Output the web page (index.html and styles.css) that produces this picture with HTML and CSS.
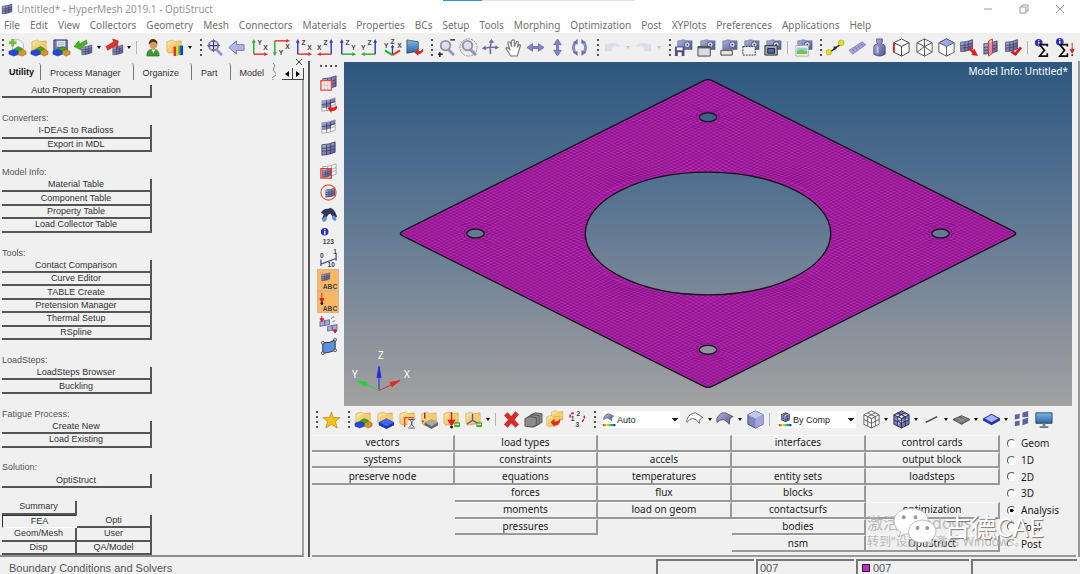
FILE: index.html
```html
<!DOCTYPE html>
<html lang="en">

<head>
    <meta charset="UTF-8">
    <meta name="viewport" content="width=device-width, initial-scale=1.0">
    <title>Untitled* - HyperMesh 2019.1 - OptiStruct</title>
    <link rel="stylesheet" href="styles.css">
</head>

<body>

    <!-- shared gradients -->
    <svg class="paints" aria-hidden="true">
        <defs>
            <linearGradient id="sky" x1="0" y1="0" x2="0" y2="1">
                <stop offset="0" stop-color="#7fb8e8" />
                <stop offset="1" stop-color="#2a64a8" />
            </linearGradient>
            <linearGradient id="gold" x1="0" y1="0" x2="1" y2="1">
                <stop offset="0" stop-color="#fdf0b0" />
                <stop offset="1" stop-color="#e5a835" />
            </linearGradient>
            <linearGradient id="steel" x1="0" y1="0" x2="1" y2="1">
                <stop offset="0" stop-color="#b4b8e4" />
                <stop offset="1" stop-color="#50548a" />
            </linearGradient>
            <linearGradient id="rainbow">
                <stop offset="0" stop-color="#e02020" />
                <stop offset=".3" stop-color="#f0e020" />
                <stop offset=".6" stop-color="#20d050" />
                <stop offset="1" stop-color="#2030e0" />
            </linearGradient>
        </defs>
    </svg>

    <!-- icon sprite -->
    <svg class="sprite" aria-hidden="true">
        <symbol id="p-comp" viewBox="0 0 20 20">
            <path d="M11 9l4 2v3l-4 2-4-2v-3z" fill="#2fae22" stroke="#1a6a14" stroke-width=".5" />
            <path d="M6 12l5 2v3l-5 2-5-2v-3z" fill="#2747d8" stroke="#142a90" stroke-width=".5" />
            <path d="M15 12l4 2v3l-4 2-4-2v-3z" fill="#d89428" stroke="#84560e" stroke-width=".5" />
        </symbol>
        <symbol id="p-folder" viewBox="0 0 20 20">
            <path d="M2 4l6-2 2 2 7-1v11l-13 2-2-2z" fill="url(#gold)" stroke="#c9963c" stroke-width=".6" />
            <path d="M5 7l13-2-2 8-12 2z" fill="#f6cf6f" opacity=".8" />
        </symbol>
        <symbol id="p-mesh" viewBox="0 0 20 20">
            <path d="M3 6q7 0 14-3v11q-7 3-14 3z" fill="url(#steel)" stroke="#2c2e50" stroke-width=".7" />
            <path d="M3 10q7 0 14-3M3 13q7 0 14-3M8 6v11M12 5v11" fill="none" stroke="#2c2e50" stroke-width=".7" />
        </symbol>
        <symbol id="p-wire" viewBox="0 0 20 20">
            <path d="M3 6q7 0 14-3v11q-7 3-14 3zM3 10q7 0 14-3M3 13q7 0 14-3M8 6v11M12 5v11" fill="#f8f8f8" stroke="#777" stroke-width=".6" />
        </symbol>
        <symbol id="p-cam" viewBox="0 0 20 20">
            <path d="M4 3h3l1-1h4l1 1h6v9H4z" fill="url(#steel)" stroke="#55588a" stroke-width=".6" />
            <circle cx="14" cy="7" r="3" fill="#dde" stroke="#4a4d80" />
            <circle cx="14" cy="7" r="1" fill="#446" />
        </symbol>
        <symbol id="p-lens" viewBox="0 0 20 20">
            <path d="M12 12l5 5" stroke="#9295c4" stroke-width="3" stroke-linecap="round" />
            <circle cx="9" cy="8" r="5" fill="#dcdee8" stroke="#9496a8" stroke-width="2" />
        </symbol>

        <symbol id="new" viewBox="0 0 20 20">
            <path d="M5 2h7l4 4v12H5z" fill="#fff" stroke="#999" stroke-width=".8" />
            <path d="M5 1v8M1 5h8" stroke="#6fc043" stroke-width="3" />
            <use href="#p-comp" />
        </symbol>
        <symbol id="open" viewBox="0 0 20 20"><use href="#p-folder" /><use href="#p-comp" /></symbol>
        <symbol id="save" viewBox="0 0 20 20">
            <path d="M2 2h14v14H4l-2-2z" fill="#7679b8" stroke="#3a3c70" />
            <path d="M5 3h9v6H5z" fill="#e8eaf6" />
            <path d="M6 5h7M6 7h7" stroke="#8a8cb8" stroke-width=".7" />
            <use href="#p-comp" />
        </symbol>
        <symbol id="import" viewBox="0 0 20 20">
            <use href="#p-mesh" x="6" y="5" width="15" height="15" />
            <path d="M0 9l5-6 1 3 7-4 1 4-7 4 1 3z" fill="#41b51f" stroke="#25780f" stroke-width=".5" />
        </symbol>
        <symbol id="export" viewBox="0 0 20 20">
            <use href="#p-mesh" x="6" y="5" width="15" height="15" />
            <path d="M14 3l-6-2 1 3-8 5 2 4 8-5 2 3z" fill="#e0312c" stroke="#9d1714" stroke-width=".5" />
        </symbol>
        <symbol id="user" viewBox="0 0 20 20">
            <path d="M4 19q0-7 5-7h3q5 0 5 7z" fill="#3d9c35" stroke="#1e611b" stroke-width=".6" />
            <path d="M9 12l2 4 2-4z" fill="#fff" />
            <ellipse cx="11" cy="7" rx="4" ry="5" fill="#d99a5b" />
            <path d="M6 7q0-6 5-6 5 1 4 6-1-3-5-3-2 1-4 3z" fill="#54310f" />
        </symbol>
        <symbol id="results" viewBox="0 0 20 20">
            <use href="#p-folder" />
            <path d="M9 9h3v10H9z" fill="#e83020" /><path d="M12 9h2v10h-2z" fill="#f4e020" /><path d="M14 8h2v10h-2z" fill="#20c840" /><path d="M16 8h3v10h-3z" fill="#2038e0" />
        </symbol>
        <symbol id="fit" viewBox="0 0 20 20">
            <use href="#p-lens" />
            <path d="M9 4v8M5 8h8" stroke="#3f4276" stroke-width="1.2" />
            <path d="M9 1l2 3H7zM9 15l2-3H7zM2 8l3-2v4zM16 8l-3-2v4z" fill="#5b5e94" />
        </symbol>
        <symbol id="back" viewBox="0 0 20 20">
            <path d="M2 10l8-7v4h8v6h-8v4z" fill="#b3b5e6" stroke="#7779b4" />
        </symbol>
        <symbol id="yx" viewBox="0 0 20 20">
            <path d="M4 17V4" stroke="#20b030" stroke-width="1.5" /><path d="M4 1l2 4H2z" fill="#20b030" />
            <path d="M4 17h12" stroke="#e03030" stroke-width="1.5" /><path d="M19 17l-4-2v4z" fill="#e03030" />
            <text x="8" y="7">Y</text><text x="14" y="13">X</text>
        </symbol>
        <symbol id="xy" viewBox="0 0 20 20">
            <path d="M3 3v12" stroke="#20b030" stroke-width="1.5" /><path d="M3 19l2-4H1z" fill="#20b030" />
            <path d="M3 3h13" stroke="#e03030" stroke-width="1.5" /><path d="M19 3l-4-2v4z" fill="#e03030" />
            <text x="7" y="18">Y</text><text x="14" y="12">X</text>
        </symbol>
        <symbol id="zx" viewBox="0 0 20 20">
            <path d="M4 17V4" stroke="#2838d8" stroke-width="1.5" /><path d="M4 1l2 4H2z" fill="#2838d8" />
            <path d="M4 17h12" stroke="#e03030" stroke-width="1.5" /><path d="M19 17l-4-2v4z" fill="#e03030" />
            <text x="8" y="7">Z</text><text x="14" y="13">X</text>
        </symbol>
        <symbol id="xz" viewBox="0 0 20 20">
            <path d="M16 17V4" stroke="#2838d8" stroke-width="1.5" /><path d="M16 1l2 4h-4z" fill="#2838d8" />
            <path d="M16 17H4" stroke="#e03030" stroke-width="1.5" /><path d="M1 17l4-2v4z" fill="#e03030" />
            <text x="8" y="7">Z</text><text x="1" y="13">X</text>
        </symbol>
        <symbol id="zy" viewBox="0 0 20 20">
            <path d="M4 17V4" stroke="#2838d8" stroke-width="1.5" /><path d="M4 1l2 4H2z" fill="#2838d8" />
            <path d="M4 17h12" stroke="#20b030" stroke-width="1.5" /><path d="M19 17l-4-2v4z" fill="#20b030" />
            <text x="8" y="7">Z</text><text x="14" y="13">Y</text>
        </symbol>
        <symbol id="yz" viewBox="0 0 20 20">
            <path d="M16 17V4" stroke="#2838d8" stroke-width="1.5" /><path d="M16 1l2 4h-4z" fill="#2838d8" />
            <path d="M16 17H4" stroke="#20b030" stroke-width="1.5" /><path d="M1 17l4-2v4z" fill="#20b030" />
            <text x="8" y="7">Z</text><text x="1" y="13">Y</text>
        </symbol>
        <symbol id="iso" viewBox="0 0 20 20">
            <path d="M10 17V9" stroke="#2838d8" stroke-width="1.5" /><path d="M10 7l2 3H8z" fill="#2838d8" />
            <path d="M10 18l-8-5" stroke="#20b030" stroke-width="2" /><path d="M10 18l8-5" stroke="#e03030" stroke-width="2" />
            <text x="8" y="6">Z</text><text x="1" y="10">Y</text><text x="15" y="10">X</text>
        </symbol>
        <symbol id="view" viewBox="0 0 20 20">
            <path d="M2 2l12 2v10l-12 2z" fill="url(#sky)" stroke="#333" stroke-width=".7" />
            <path d="M10 15l4-3v2q3 0 5-3 1 5-5 6v2z" fill="#e81c1c" />
        </symbol>
        <symbol id="zoomio" viewBox="0 0 20 20">
            <use href="#p-lens" />
            <path d="M14 2h5M1 17h5M3 15v5" stroke="#111" stroke-width="1.5" />
        </symbol>
        <symbol id="zoomc" viewBox="0 0 20 20">
            <use href="#p-lens" />
            <circle cx="10" cy="10" r="9" fill="none" stroke="#888" stroke-dasharray="2 1" />
        </symbol>
        <symbol id="pan" viewBox="0 0 20 20">
            <path d="M11 3q-2 7-1 14M3 11q7-2 14-1" stroke="#6a6da8" stroke-width="1.6" fill="none" />
            <path d="M11 1l3 4H8zM1 11l4-3v5zM19 10l-4-2v4z" fill="#6a6da8" />
        </symbol>
        <symbol id="hand" viewBox="0 0 20 20">
            <path d="M7 19q-2-4-5-8 1-2 4 1L4 5q1-2 3 0l1 4V3q2-2 3 0v6l2-5q2-1 2 1l-1 5 2-3q2 0 1 2l-3 10z" fill="#fff" stroke="#777" stroke-width="1.2" />
        </symbol>
        <symbol id="lr" viewBox="0 0 20 20">
            <path d="M1 10l6-4v3h6V6l6 4-6 4v-3H7v3z" fill="#8184c8" stroke="#5a5d98" stroke-width=".7" />
        </symbol>
        <symbol id="ud" viewBox="0 0 20 20">
            <path d="M10 1l4 6h-3v6h3l-4 6-4-6h3V7H6z" fill="#8184c8" stroke="#5a5d98" stroke-width=".7" />
        </symbol>
        <symbol id="rot" viewBox="0 0 20 20">
            <path d="M6 4q-5 6 0 12M14 4q5 6 0 12" fill="none" stroke="#8588c8" stroke-width="3" />
            <path d="M8 1v6L3 5zM8 19v-5l-5 1zM12 1v5l5-1zM12 19v-6l5 2z" fill="#6a6db0" />
        </symbol>
        <symbol id="undo" viewBox="0 0 20 20">
            <path d="M2 14l1-8 2 2q7-6 13 1-6-3-10 2l2 2z" fill="#dcdde9" stroke="#cfd0de" stroke-width=".5" />
        </symbol>
        <symbol id="redo" viewBox="0 0 20 20">
            <path d="M18 14l-1-8-2 2q-7-6-13 1 6-3 10 2l-2 2z" fill="#dcdde9" stroke="#cfd0de" stroke-width=".5" />
        </symbol>
        <symbol id="camsave" viewBox="0 0 20 20">
            <use href="#p-cam" />
            <path d="M1 9h10v10H1z" fill="#4c4f90" /><path d="M3 10h6v3H3zM4 15h4v4H4z" fill="#fff" />
        </symbol>
        <symbol id="camwin" viewBox="0 0 20 20">
            <use href="#p-cam" />
            <path d="M1 9h13v10H1z" fill="#d8dce6" stroke="#444" /><path d="M1 10h13" stroke="#555" stroke-width="2" />
        </symbol>
        <symbol id="cambar" viewBox="0 0 20 20">
            <use href="#p-cam" />
            <path d="M2 13h12v5H2z" fill="#e4e4e4" stroke="#444" />
        </symbol>
        <symbol id="camsel" viewBox="0 0 20 20">
            <use href="#p-cam" />
            <path d="M2 9h13v9H2z" fill="#f0f0f0" stroke="#333" stroke-dasharray="2 1" />
        </symbol>
        <symbol id="camscreen" viewBox="0 0 20 20">
            <use href="#p-cam" />
            <path d="M2 8h13v10H2z" fill="#a5aabc" stroke="#333" /><path d="M5 11h7v5H5z" fill="#4d69b4" stroke="#222" />
        </symbol>
        <symbol id="campic" viewBox="0 0 20 20">
            <use href="#p-cam" />
            <path d="M2 8h13v11H2z" fill="#fff" stroke="#aaa" /><path d="M3 10h11v4H3z" fill="#8fd0f2" /><path d="M3 14l4-2 7 2v3H3z" fill="#7bc246" />
        </symbol>
        <symbol id="nodes" viewBox="0 0 20 20">
            <path d="M4 15L16 6" stroke="#222" stroke-width="1.5" />
            <circle cx="3" cy="15" r="3" fill="#e6df1c" stroke="#918c0c" stroke-width=".5" />
            <circle cx="16" cy="5" r="3" fill="#e6df1c" stroke="#918c0c" stroke-width=".5" />
            <path d="M8 9h3v3H8z" fill="#222" />
        </symbol>
        <symbol id="ruler" viewBox="0 0 20 20">
            <path d="M1 13l14-9 4 3-14 10z" fill="#a0a3dc" stroke="#7477b4" stroke-width=".7" />
            <path d="M5 12l1 2M8 10l1 2M11 8l1 2M14 6l1 2" stroke="#6669a4" />
        </symbol>
        <symbol id="mass" viewBox="0 0 20 20">
            <path d="M7 1h6v3l-1 2q4 1 4 3v8q-6 4-12 0V9q0-2 4-3L7 4z" fill="url(#steel)" stroke="#44487c" stroke-width=".8" />
            <path d="M8 9v7" stroke="#c9cbee" stroke-width="2" />
        </symbol>
        <symbol id="cubered" viewBox="0 0 20 20">
            <path d="M10 1l8 4v10l-8 4-8-4V5zM2 5l8 4 8-4M10 9v10" fill="#fff" stroke="#444" />
            <path d="M2 5v10" stroke="#e02020" stroke-width="2" />
        </symbol>
        <symbol id="cubewire" viewBox="0 0 20 20">
            <path d="M10 1l8 4v10l-8 4-8-4V5zM2 5l8 4 8-4M10 9v10M10 1v8M2 15l8-6 8 6" fill="#fff" stroke="#555" />
        </symbol>
        <symbol id="cubetop" viewBox="0 0 20 20">
            <path d="M10 1l8 4v10l-8 4-8-4V5zM10 9v10" fill="#fff" stroke="#555" />
            <path d="M10 1l8 4-8 4-8-4z" fill="#a3a7e0" stroke="#555a90" />
        </symbol>
        <symbol id="meshmove" viewBox="0 0 20 20">
            <use href="#p-mesh" x="-1" y="-1" width="18" height="18" />
            <path d="M9 10l2-1 4 4 1-2 4 8-7-1 1-2z" fill="#e81c1c" />
        </symbol>
        <symbol id="meshcut" viewBox="0 0 20 20">
            <use href="#p-mesh" />
            <path d="M8 3l4-2v15l-4 3z" fill="#f8b0b0" fill-opacity=".7" stroke="#e82828" />
        </symbol>
        <symbol id="meshcheck" viewBox="0 0 20 20">
            <use href="#p-mesh" x="0" y="-1" width="18" height="18" />
            <path d="M9 14l4 3 6-7" fill="none" stroke="#dc1c1c" stroke-width="3" />
        </symbol>
        <symbol id="sum" viewBox="0 0 20 20">
            <circle cx="6" cy="5" r="4" fill="#2a2fc0" /><path d="M6 2v1M6 4v4" stroke="#fff" stroke-width="1.5" />
            <path d="M15 9V7H7l5 6-5 6h8v-3" fill="none" stroke="#111" stroke-width="1.8" />
        </symbol>
        <symbol id="sumload" viewBox="0 0 20 20">
            <circle cx="4" cy="4" r="4" fill="#2a2fc0" /><path d="M4 1v1M4 3v4" stroke="#fff" stroke-width="1.5" />
            <path d="M12 9V7H4l5 6-5 6h8v-3" fill="none" stroke="#111" stroke-width="1.8" />
            <path d="M17 5v9M15 12h4l-2 4z" stroke="#e01c1c" fill="#e01c1c" /><circle cx="17" cy="18" r="1" fill="#111" />
        </symbol>

        <!-- display strip -->
        <symbol id="maskbox" viewBox="0 0 20 20">
            <use href="#p-mesh" x="1" y="0" /><path d="M2 8h11v10H2z" fill="#f3eeee" stroke="#ef4a3a" stroke-width="1.4" /><path d="M3 13h9M6 9v8M9 9v8" stroke="#bbb" stroke-width=".6" />
        </symbol>
        <symbol id="reverse" viewBox="0 0 20 20">
            <use href="#p-wire" /><path d="M3 6q7 0 14-3v4l-5 2v3l-9 2z" fill="url(#steel)" /><path d="M3 10q7 0 14-3M8 6v8M12 5v7" fill="none" stroke="#2c2e50" stroke-width=".7" /><path d="M9 14l4-3v2q3 1 6-2 1 6-6 6v2z" fill="#e81c1c" />
        </symbol>
        <symbol id="adjacent" viewBox="0 0 20 20">
            <use href="#p-wire" /><path d="M3 6q7 0 14-3v4l-5 2v3l-9 2z" fill="url(#steel)" /><path d="M3 10q7 0 14-3M8 6v8M12 5v7" fill="none" stroke="#2c2e50" stroke-width=".7" />
        </symbol>
        <symbol id="showall" viewBox="0 0 20 20"><use href="#p-mesh" /></symbol>
        <symbol id="maskout" viewBox="0 0 20 20">
            <use href="#p-wire" x="1" /><use href="#p-mesh" x="1" y="6" width="14" height="13" /><path d="M2 8h11v10H2z" fill="none" stroke="#ef3a2a" stroke-width="1.4" />
        </symbol>
        <symbol id="sphere" viewBox="0 0 20 20">
            <use href="#p-mesh" x="5" y="2" width="14" height="16" /><circle cx="10" cy="10" r="8" fill="none" stroke="#ef5a4a" stroke-width="1.3" />
        </symbol>
        <symbol id="find" viewBox="0 0 20 20">
            <path d="M2 8q3-5 8-4l2-1q4 1 7 9l-3 3-4-6-2 1-4 6-3-1 2-5z" fill="#34375c" />
            <ellipse cx="6" cy="15" rx="2" ry="3" fill="#5f95e8" transform="rotate(30 6 15)" /><ellipse cx="16" cy="14" rx="2" ry="3" fill="#5f95e8" transform="rotate(-30 16 14)" />
        </symbol>
        <symbol id="numbers" viewBox="0 0 20 20">
            <circle cx="6" cy="5" r="4" fill="#2a2fc0" /><path d="M6 2v1M6 4v4" stroke="#fff" stroke-width="1.5" /><text x="4" y="18">123</text>
        </symbol>
        <symbol id="scale" viewBox="0 0 20 20">
            <path d="M2 11v7M18 5v7M2 16l16-6" stroke="#4a4d80" stroke-width="1.3" fill="none" /><text x="1" y="9">0</text><text x="15" y="5">1</text><text x="9" y="19">10</text>
        </symbol>
        <symbol id="abcmesh" viewBox="0 0 20 20"><use href="#p-mesh" x="1" y="0" width="12" height="12" /><text x="4" y="19">ABC</text></symbol>
        <symbol id="abcload" viewBox="0 0 20 20"><path d="M3 0v7M1 6h4l-2 4z" stroke="#d81c1c" fill="#d81c1c" /><circle cx="3" cy="11" r="1.5" fill="#222" /><text x="4" y="19">ABC</text></symbol>
        <symbol id="loads" viewBox="0 0 20 20">
            <path d="M1 7l10-2v5L1 12zM9 12l10-2v5L9 17z" fill="#a4a7d8" stroke="#55588c" stroke-width=".8" /><path d="M6 6v5M14 11v5" stroke="#55588c" /><path d="M3 1v4M1 4h4L3 7zM17 15v2M15 16h4l-2 3z" fill="#e01c1c" stroke="#e01c1c" /><path d="M13 4q2-4 3-1M14 7l3-1" stroke="#777" fill="none" />
        </symbol>
        <symbol id="patch" viewBox="0 0 20 20">
            <path d="M4 6q7 1 13-3v11q-7 3-13 3z" fill="#5b8fe0" stroke="#333" />
            <g fill="#ddd" stroke="#333" stroke-width=".8"><circle cx="4" cy="6" r="1.5" /><circle cx="17" cy="3" r="1.5" /><circle cx="17" cy="14" r="1.5" /><circle cx="4" cy="17" r="1.5" /></g>
        </symbol>

        <!-- collectors bar -->
        <symbol id="star" viewBox="0 0 20 20">
            <path d="M10 2l2 6h7l-5 4 2 7-6-4-6 4 2-7-5-4h7z" fill="#f7c21a" stroke="#b98a10" stroke-width=".8" />
        </symbol>
        <symbol id="ccomp" viewBox="0 0 20 20"><use href="#p-folder" /><use href="#p-comp" /></symbol>
        <symbol id="cprop" viewBox="0 0 20 20"><use href="#p-folder" /><path d="M11 9l8 4v3l-8 4-8-4v-3z" fill="#1834c4" /><path d="M11 9l8 4-8 4-8-4z" fill="#4068e8" /></symbol>
        <symbol id="cmat" viewBox="0 0 20 20"><use href="#p-folder" /><path d="M7 18V8h10" fill="none" stroke="#e84a3a" stroke-width="1.5" /><path d="M10 10h9v9h-9z" fill="#eee" /><path d="M11 10h7M11 19h7M12 10q5 4 0 8M17 10q-5 4 0 8" stroke="#555" fill="none" /></symbol>
        <symbol id="csys" viewBox="0 0 20 20"><use href="#p-folder" /><path d="M12 10l7 3v3l-7 4-7-4v-3z" fill="#666" /><path d="M12 10l7 3-7 4-7-4z" fill="#aaa" /><path d="M5 3v6M3 11v2M5 15h1" stroke="#b02020" stroke-width="1.5" /></symbol>
        <symbol id="cload" viewBox="0 0 20 20"><use href="#p-folder" /><path d="M10 2v10M7 11h6l-3 5z" fill="#e01c1c" stroke="#e01c1c" stroke-width="1.5" /><circle cx="10" cy="18" r="1.5" fill="#111" /><path d="M13 13h6v5h-6z" fill="#52a839" /><path d="M14 15h4" stroke="#fff" /></symbol>
        <symbol id="cvec" viewBox="0 0 20 20"><use href="#p-folder" /><path d="M9 4v7l-6 4M9 11l6 3" stroke="#555bb0" stroke-width="1.5" fill="none" /><path d="M13 13h6v5h-6z" fill="#52a839" /><path d="M14 15h4" stroke="#fff" /></symbol>
        <symbol id="delete" viewBox="0 0 20 20"><path d="M4 4l12 13M16 3L4 17" stroke="#d92a2a" stroke-width="5" /></symbol>
        <symbol id="cards" viewBox="0 0 20 20">
            <g fill="#8d8d8d" stroke="#444" stroke-width=".8"><path d="M7 5l5-2 7 1v9l-6 3-6-1z" /><path d="M4 7l5-2 7 1v9l-6 3-6-1z" /><path d="M1 9l5-2 7 1v8l-5 2-7-1z" /></g>
        </symbol>
        <symbol id="organize" viewBox="0 0 20 20"><use href="#p-folder" x="4" y="-1" width="16" height="16" /><use href="#p-folder" x="-1" y="4" width="17" height="17" /><path d="M5 13l4-4v3q4 1 6-3 1 7-6 7v2z" fill="#e02a1c" /></symbol>
        <symbol id="renumber" viewBox="0 0 20 20"><text x="9" y="6">2</text><text x="3" y="12">1</text><text x="8" y="18">3</text><path d="M2 8q0-4 4-5M17 6q1 4-3 7" fill="none" stroke="#e02020" stroke-width="1.7" stroke-dasharray="3 1" /></symbol>
        <symbol id="shell" viewBox="0 0 20 20"><path d="M1 9q3-7 9-6l8 4q-4 0-4 8-2-3-6-5-4 0-7 3z" fill="url(#steel)" stroke="#444" stroke-width=".8" /></symbol>
        <symbol id="shellline" viewBox="0 0 20 20"><path d="M1 10q3-7 9-7l8 5q-4 0-4 6-3-5-7-5-3 0-6 4z" fill="#fafafa" stroke="#666" /></symbol>
        <symbol id="solid" viewBox="0 0 20 20"><path d="M10 1l8 4v10l-8 4-8-4V5z" fill="#8388c0" stroke="#454977" /><path d="M10 1l8 4-8 4-8-4z" fill="#c3c6ee" /><path d="M10 9l8-4v10l-8 4z" fill="#a3a7dc" /></symbol>
        <symbol id="gridwire" viewBox="0 0 20 20"><path d="M10 1l8 4v10l-8 4-8-4V5zM2 5l8 4 8-4M10 9v10M6 3l8 4v10M14 3L6 7v10M2 10l8 4 8-4" fill="#fff" stroke="#555" stroke-width=".9" /></symbol>
        <symbol id="gridsolid" viewBox="0 0 20 20"><path d="M10 1l8 4v10l-8 4-8-4V5zM2 5l8 4 8-4M10 9v10M6 3l8 4v10M14 3L6 7v10M2 10l8 4 8-4" fill="#7479b4" stroke="#22254c" stroke-width=".9" /></symbol>
        <symbol id="line" viewBox="0 0 20 20"><path d="M4 13l12-6" stroke="#444" stroke-width="1.5" /></symbol>
        <symbol id="plate" viewBox="0 0 20 20"><path d="M1 10l9-4 9 4-9 5z" fill="#777" stroke="#444" /><path d="M5 8l9 5M10 6l6 5M15 8l-9 5" stroke="#aaa" stroke-width=".6" /></symbol>
        <symbol id="slab" viewBox="0 0 20 20"><path d="M1 9l9-5 9 5v2l-9 5-9-5z" fill="#2434b8" /><path d="M3 9l7-4 7 4-7 4z" fill="#a5b3f4" /></symbol>
        <symbol id="split" viewBox="0 0 20 20"><g fill="#5e629c"><path d="M3 5l5-1v5l-5 1zM11 3l6-2v6l-6 1zM3 12l5-1v5l-5 1zM11 10l6-2v6l-6 2z" /></g></symbol>
        <symbol id="monitor" viewBox="0 0 20 20"><path d="M2 3h17v11H2z" fill="url(#sky)" stroke="#2c4a60" /><path d="M9 14h3v3H9z" fill="#777" /><path d="M6 18h9" stroke="#555" stroke-width="1.5" /></symbol>
        <symbol id="meshcolor" viewBox="0 0 20 20"><use href="#gridsolid" x="3" y="0" width="14" height="14" /><path d="M1 16h17v3H1z" fill="url(#rainbow)" /></symbol>
        <symbol id="shellcolor" viewBox="0 0 20 20"><use href="#shell" x="1" y="0" width="17" height="16" /><path d="M1 16h17v3H1z" fill="url(#rainbow)" /></symbol>
    </svg>

    <div class="title-bar">
        <i class="tab-mark"></i>
        <svg class="logo" viewBox="0 0 20 20"><use href="#p-mesh" /></svg>
        <span>Untitled* - HyperMesh 2019.1 - OptiStruct</span>
        <div class="window-buttons">
            <button aria-label="Minimize"><svg viewBox="0 0 10 10"><path d="M1 5h8" /></svg></button>
            <button aria-label="Restore"><svg viewBox="0 0 10 10"><path d="M1 3h6v6H1zM3 3V1h6v6H7" /></svg></button>
            <button aria-label="Close"><svg viewBox="0 0 10 10"><path d="M1 1l8 8M9 1L1 9" /></svg></button>
        </div>
    </div>

    <nav class="menu-bar">
        <a href="#">File</a><a href="#">Edit</a><a href="#">View</a><a href="#">Collectors</a><a href="#">Geometry</a>
        <a href="#">Mesh</a><a href="#">Connectors</a><a href="#">Materials</a><a href="#">Properties</a><a href="#">BCs</a>
        <a href="#">Setup</a><a href="#">Tools</a><a href="#">Morphing</a><a href="#">Optimization</a><a href="#">Post</a>
        <a href="#">XYPlots</a><a href="#">Preferences</a><a href="#">Applications</a><a href="#">Help</a>
    </nav>

    <div class="toolbar main-tools">
        <div class="group" data-items="grip new open save import caret export caret sep user results caret"></div>
        <div class="group" data-items="grip fit back yx xy zx xz zy yz iso view"></div>
        <div class="group" data-items="grip zoomio zoomc pan hand lr ud rot"></div>
        <div class="group" data-items="grip undo caret-off redo caret-off"></div>
        <div class="group" data-items="grip camsave camwin cambar camsel camscreen sep campic"></div>
        <div class="group" data-items="grip nodes ruler mass cubered cubewire cubetop meshmove meshcut meshcheck sep sum sumload"></div>
    </div>

    <div class="workspace">
        <aside class="sidebar">
            <div class="tabs">
                <button class="active">Utility</button>
                <button>Process Manager</button>
                <button>Organize</button>
                <button>Part</button>
                <button class="cut">Model</button>
                <svg class="tear" viewBox="0 0 4 18"><path d="M1 0q3 2 1 5t1 5-2 5 1 3" /></svg>
                <div class="tab-arrows">
                    <button aria-label="Scroll left"><svg viewBox="0 0 6 8"><path d="M5 1v6L1 4z" /></svg></button>
                    <button aria-label="Scroll right"><svg viewBox="0 0 6 8"><path d="M1 1v6l4-3z" /></svg></button>
                </div>
                <button class="close" aria-label="Close panel"><svg viewBox="0 0 8 8"><path d="M1 1l6 6M7 1L1 7" /></svg></button>
            </div>
            <div class="utility">
                <button class="wide">Auto Property creation</button>
                <h2>Converters:</h2>
                <button class="wide">I-DEAS to Radioss</button>
                <button class="wide">Export in MDL</button>
                <h2>Model Info:</h2>
                <button class="wide">Material Table</button>
                <button class="wide">Component Table</button>
                <button class="wide">Property Table</button>
                <button class="wide">Load Collector Table</button>
                <h2>Tools:</h2>
                <button class="wide">Contact Comparison</button>
                <button class="wide">Curve Editor</button>
                <button class="wide">TABLE Create</button>
                <button class="wide">Pretension Manager</button>
                <button class="wide">Thermal Setup</button>
                <button class="wide">RSpline</button>
                <h2>LoadSteps:</h2>
                <button class="wide">LoadSteps Browser</button>
                <button class="wide">Buckling</button>
                <h2>Fatigue Process:</h2>
                <button class="wide">Create New</button>
                <button class="wide">Load Existing</button>
                <h2>Solution:</h2>
                <button class="wide">OptiStruct</button>
                <div class="blank"></div>
                <button>Summary</button>
                <span></span>
                <button class="pressed">FEA</button>
                <button>Opti</button>
                <button>Geom/Mesh</button>
                <button>User</button>
                <button>Disp</button>
                <button>QA/Model</button>
            </div>
        </aside>

        <main class="content">
            <div class="stage">
                <div class="strip" data-items="grip maskbox reverse adjacent showall maskout sphere find numbers scale abcmesh abcload loads patch"></div>
                <div class="viewport">
                    <svg class="model" viewBox="0 0 728 343">
                        <defs>
                            <clipPath id="plate-clip">
                                <path clip-rule="evenodd" d="M-98-100H98L100-98V98L98 100H-98L-100 98V-98ZM-56 0a56 56 0 1 0 112 0a56 56 0 1 0-112 0ZM-79-75a4 4 0 1 0 8 0a4 4 0 1 0-8 0ZM71-75a4 4 0 1 0 8 0a4 4 0 1 0-8 0ZM-79 75a4 4 0 1 0 8 0a4 4 0 1 0-8 0ZM71 75a4 4 0 1 0 8 0a4 4 0 1 0-8 0Z" />
                            </clipPath>
                        </defs>
                        <g transform="matrix(1.55 .775 -1.55 .775 364 171)">
                            <g clip-path="url(#plate-clip)">
                                <rect class="plate" x="-100" y="-100" width="200" height="200" />
                                <path class="mesh" id="mesh" />
                            </g>
                            <path class="outline" d="M-97-100H97Q100-100 100-97V97Q100 100 97 100H-97Q-100 100-100 97V-97Q-100-100-97-100Z" />
                            <circle class="outline" r="56" />
                            <circle class="outline" cx="-75" cy="-75" r="4" />
                            <circle class="outline" cx="75" cy="-75" r="4" />
                            <circle class="outline" cx="-75" cy="75" r="4" />
                            <circle class="outline" cx="75" cy="75" r="4" />
                        </g>
                        <g class="triad">
                            <path d="M35 328V304" stroke="#2a2ae0" /><path d="M35 304l2 11h-4z" fill="#2a2ae0" stroke="#2a2ae0" />
                            <path d="M35 328L20 321" stroke="#20d830" /><path d="M13 318l10 2-2 4z" fill="#20d830" stroke="#20d830" />
                            <path d="M35 328L48 322" stroke="#e82828" /><path d="M56 318l-8 6-2-4z" fill="#e82828" stroke="#e82828" />
                            <text x="34" y="296">Z</text><text x="8" y="315">Y</text><text x="60" y="315">X</text>
                        </g>
                    </svg>
                    <p class="info">Model Info: Untitled*</p>
                </div>
            </div>

            <div class="toolbar view-tools">
                <div class="group" data-items="grip star"></div>
                <div class="group" data-items="grip ccomp cprop cmat csys cload cvec caret sep delete cards organize renumber"></div>
                <div class="group" data-items="grip"></div>
                <label class="picker">
                    <svg><use href="#shellcolor" /></svg>
                    <select aria-label="Color mode"><option>Auto</option></select>
                </label>
                <div class="group" data-items="shellline caret shell caret solid sep"></div>
                <label class="picker">
                    <svg><use href="#meshcolor" /></svg>
                    <select aria-label="Element color"><option>By Comp</option></select>
                </label>
                <div class="group" data-items="gridwire caret gridsolid caret line caret plate caret slab caret split monitor"></div>
            </div>

            <div class="panel">
                <div class="commands">
                    <button>vectors</button><button>load types</button><button></button><button>interfaces</button><button>control cards</button>
                    <button>systems</button><button>constraints</button><button>accels</button><button></button><button>output block</button>
                    <button>preserve node</button><button>equations</button><button>temperatures</button><button>entity sets</button><button>loadsteps</button>
                    <span></span><button>forces</button><button>flux</button><button>blocks</button><span></span>
                    <span></span><button>moments</button><button>load on geom</button><button>contactsurfs</button><button>optimization</button>
                    <span></span><button>pressures</button><span></span><button>bodies</button><span></span>
                    <span></span><span></span><span></span><button>nsm</button><button>OptiStruct</button>
                </div>
                <div class="pages">
                    <label><input type="radio" name="page">Geom</label>
                    <label><input type="radio" name="page">1D</label>
                    <label><input type="radio" name="page">2D</label>
                    <label><input type="radio" name="page">3D</label>
                    <label><input type="radio" name="page" checked>Analysis</label>
                    <label><input type="radio" name="page">Tool</label>
                    <label><input type="radio" name="page">Post</label>
                </div>
                <div class="activate" lang="zh">
                    <p class="big">激活 Windows</p>
                    <p>转到“设置”以激活 Windows。</p>
                </div>
                <div class="brand" lang="zh">
                    <svg viewBox="0 0 46 38">
                        <path d="M18 1C8 1 1 7 1 14q0 7 7 11l-2 5 7-3q3 1 6 1c10 0 17-6 17-14S28 1 18 1z" />
                        <path d="M30 13c-8 0-14 5-14 12s6 11 14 11l5-1 5 2-1-4q5-3 5-8c0-7-6-12-14-12z" />
                        <g class="eyes"><circle cx="11" cy="10" r="2" /><circle cx="23" cy="10" r="2" /><circle cx="25" cy="21" r="2" /><circle cx="35" cy="21" r="2" /></g>
                    </svg>
                    <span>古德CAE</span>
                </div>
            </div>
        </main>
    </div>

    <footer class="status-bar">
        <p>Boundary Conditions and Solvers</p>
        <div class="fields">
            <output></output>
            <output>007</output>
            <output><i class="swatch"></i>007</output>
            <output></output>
        </div>
    </footer>

    <script src="app.js"></script>
</body>

</html>
```

FILE: styles.css
```css
* {
    margin: 0;
    padding: 0;
    box-sizing: border-box;
}

html,
body {
    height: 100%;
}

body {
    display: flex;
    flex-direction: column;
    font-family: "Noto Sans", "Noto Sans CJK SC", sans-serif;
    font-size: 10px;
    color: #222;
    background-color: #f0f0f0;
    overflow: hidden;
}

button {
    font: inherit;
    color: inherit;
    border: 0;
    background: none;
}

.paints {
    position: absolute;
    width: 0;
    height: 0;
}

.sprite {
    display: none;
}

symbol text {
    font-family: "Liberation Sans", sans-serif;
    font-size: 7px;
    font-weight: 700;
    fill: #444;
}

/* title and menu */

.title-bar {
    position: relative;
    display: flex;
    align-items: center;
    height: 18px;
    padding-right: 15px;
    gap: 3px;
    color: #969696;
    background-color: white;
}

.tab-mark {
    position: absolute;
    top: 0;
    left: 41%;
    width: 192px;
    height: 1px;
    background-color: #e4e4e4;
    border-left: 39px solid #3a8ee0;
}

.logo {
    width: 14px;
    height: 14px;
}

.window-buttons {
    display: flex;
    margin-left: auto;
    gap: 26px;
}

.window-buttons svg {
    display: block;
    width: 10px;
    height: 10px;
    fill: none;
    stroke: #999;
}

.menu-bar {
    display: flex;
    align-items: center;
    gap: 10px;
    height: 15px;
    padding-left: 4px;
    background-color: white;
}

.menu-bar a {
    color: #707070;
    text-decoration: none;
    line-height: 15px;
}

/* toolbars */

.toolbar {
    display: flex;
    align-items: center;
    gap: 4px;
}

.group {
    display: flex;
    align-items: center;
}

.main-tools {
    height: 28px;
    padding-right: 4px;
}

.main-tools .group {
    flex: auto;
}

.main-tools .tool {
    flex: 1 1 22px;
}

.tool {
    display: flex;
    align-items: center;
    justify-content: center;
    width: 22px;
    height: 22px;
}

.tool svg {
    width: 19px;
    height: 19px;
}

.caret {
    flex: none;
    width: 8px;
    height: 22px;
}

.caret::before {
    content: "";
    display: block;
    margin: 0 auto;
    width: 0;
    border: 2px solid transparent;
    border-top: 3px solid #111;
    border-bottom: 0;
}

.caret.off::before {
    border-top-color: #c8c8c8;
}

.sep {
    flex: none;
    width: 1px;
    height: 13px;
    margin: 0 4px 0 3px;
    background-color: #b5b5b5;
}

.grip {
    flex: none;
    width: 2px;
    height: 17px;
    margin: 0 2px;
    background-image: linear-gradient(#555 2px, transparent 2px);
    background-size: 2px 5px;
}

/* workspace */

.workspace {
    flex: 1;
    display: flex;
    min-height: 0;
}

.sidebar {
    display: flex;
    flex-direction: column;
    width: 310px;
    padding-right: 4px;
    border-right: 2px solid #555;
    font-family: "Liberation Sans", Arial, sans-serif;
    font-size: 9px;
    color: #333;
}

.tabs {
    position: relative;
    display: flex;
    align-items: flex-end;
    height: 19px;
    padding-left: 2px;
}

.tabs > button {
    height: 17px;
    padding: 2px 12px 0 9px;
    border-right: 1px solid #777;
    border-radius: 0 3px 0 0;
    white-space: nowrap;
}

.tabs .active {
    padding: 0 6px 0 7px;
    font-weight: 700;
    color: #111;
}

.tabs .cut {
    padding-right: 8px;
    border: 0;
}

.tabs .close {
    position: absolute;
    top: -3px;
    right: 1px;
    height: 8px;
    padding: 0;
    border: 0;
}

.close svg {
    display: block;
    width: 8px;
    height: 8px;
    fill: none;
    stroke: #444;
}

.tear {
    width: 4px;
    height: 17px;
    fill: none;
    stroke: #777;
}

.tab-arrows {
    display: flex;
    margin-left: auto;
}

.tab-arrows button {
    width: 11px;
    height: 12px;
    border: 1px solid #444;
    border-width: 0 1px 1px 0;
}

.tab-arrows svg {
    display: block;
    margin: auto;
    width: 6px;
    height: 8px;
}

.utility {
    flex: 1;
    display: grid;
    grid-template-columns: 75px 75px;
    grid-auto-rows: 1fr;
    min-height: 0;
    padding: 5px 0 0 2px;
    border-right: 2px solid #a2a2a2;
    border-bottom: 2px solid #8c8c8c;
}

.utility button {
    min-height: 0;
    line-height: 11px;
    border-right: 2px solid #555;
    border-bottom: 2px solid #555;
}

.utility .wide,
.utility .blank,
.utility h2 {
    grid-column: span 2;
}

.utility h2 {
    grid-row: span 2;
    align-self: end;
    font-size: 9px;
    font-weight: 400;
    line-height: 13px;
    color: #555;
}

.utility .pressed {
    border: 1px solid #333;
    border-right-color: white;
    border-bottom-color: white;
}

.content {
    flex: 1;
    display: flex;
    flex-direction: column;
    min-width: 0;
    padding: 0 2px 0 2px;
    border-right: 2px solid #999;
}

.stage {
    flex: 1;
    display: flex;
    min-height: 0;
    padding: 1px 4px 0 4px;
    gap: 4px;
}

.strip {
    display: flex;
    flex-direction: column;
    align-items: center;
    width: 24px;
}

.strip .grip {
    width: 17px;
    height: 2px;
    margin: 3px 0 4px;
    background-image: linear-gradient(90deg, #555 2px, transparent 2px);
    background-size: 5px 2px;
}

.strip .tool.on {
    background-color: #fbb664;
    border: 1px solid #d8b48a;
}

.viewport {
    position: relative;
    flex: 1;
    background-image: linear-gradient(#2d5780, #577391 40%, #8b929c 80%, #a1a1a1);
}

.model {
    position: absolute;
    inset: 0;
    width: 100%;
    height: 100%;
}

.plate {
    fill: #b424b1;
}

.mesh {
    fill: none;
    stroke: #40083f;
    stroke-opacity: .5;
    stroke-width: .6px;
    vector-effect: non-scaling-stroke;
}

.outline {
    fill: none;
    stroke: #15101c;
    stroke-width: 1.4px;
    vector-effect: non-scaling-stroke;
}

.triad text {
    font-size: 10px;
    fill: white;
}

.info {
    position: absolute;
    top: 2px;
    right: 4px;
    line-height: 15px;
    color: white;
}

.view-tools {
    height: 27px;
    padding-left: 2px;
}

.picker {
    display: flex;
    align-items: center;
    width: 78px;
    height: 17px;
    background-color: white;
}

.picker svg {
    flex: none;
    width: 15px;
    height: 17px;
}

.picker select {
    flex: 1;
    min-width: 0;
    height: 17px;
    border: 0;
    outline: 0;
    appearance: none;
    font-family: "Liberation Sans", Arial, sans-serif;
    font-size: 9px;
    color: #222;
    background: linear-gradient(#222, #222) no-repeat right 3px top 8px / 4px 1px,
        linear-gradient(#222, #222) no-repeat right 2px top 7px / 6px 1px,
        linear-gradient(#222, #222) no-repeat right 4px top 9px / 2px 1px;
}

/* command panel */

.panel {
    position: relative;
    display: flex;
    padding: 2px 0 3px;
    border-bottom: 2px solid #999;
}

.commands {
    flex: 1;
    display: grid;
    grid-template-columns: 16fr 16fr 15fr 15fr 15fr;
    grid-template-rows: repeat(7, 1fr);
}

.commands button {
    line-height: 13px;
    border-top: 1px solid #fafafa;
    border-right: 2px solid #999;
    border-bottom: 2px solid #999;
}

.pages {
    display: grid;
    grid-template-rows: repeat(7, 1fr);
    width: 76px;
    height: 117px;
    padding-left: 7px;
}

.pages label {
    display: flex;
    align-items: center;
    gap: 5px;
}

.pages input {
    appearance: none;
    width: 9px;
    height: 9px;
    border: 1px solid;
    border-color: #555 white white #555;
    border-radius: 50%;
    background-color: white;
}

.pages input:checked {
    background-image: radial-gradient(circle, #111 2px, transparent 2px);
}

.activate {
    position: absolute;
    right: 50px;
    bottom: 5px;
    font-size: 12px;
    line-height: 16px;
    color: #b4b4b4;
    white-space: nowrap;
    pointer-events: none;
    opacity: .9;
}

.activate .big {
    font-size: 16px;
    line-height: 22px;
}

.brand {
    position: absolute;
    right: 32px;
    bottom: 10px;
    display: flex;
    align-items: center;
    gap: 6px;
    font-family: "Noto Sans CJK SC", sans-serif;
    font-size: 26px;
    line-height: 30px;
    color: white;
    text-shadow: 1px 1px 1px #777;
    pointer-events: none;
}

.brand svg {
    width: 45px;
    height: 38px;
    fill: white;
    stroke: #bbb;
}

.brand .eyes {
    fill: #999;
    stroke: none;
}

/* status bar */

.status-bar {
    display: flex;
    height: 17px;
    padding-left: 9px;
    font-family: "Liberation Sans", Arial, sans-serif;
    font-size: 11px;
    color: #555;
}

.status-bar p {
    line-height: 22px;
    flex: 1;
}

.fields {
    display: grid;
    grid-template-columns: 98px 98px 113px 106px;
    gap: 2px;
    padding: 2px 3px 0 0;
    line-height: 15px;
}

.fields output {
    padding-left: 2px;
    border: 2px solid #777;
    border-width: 2px 0 0 2px;
}

.swatch {
    display: inline-block;
    width: 8px;
    height: 8px;
    margin: 0 3px 0 2px;
    border: 1px solid #222;
    background-color: #c22cc4;
}
```

FILE: app.js
```js
let groups = document.querySelectorAll('[data-items]');
let pressed = ['abcmesh', 'abcload'];

function makeItem(name) {
    if (name === 'grip' || name === 'sep') {
        return `<span class="${name}"></span>`;
    }
    if (name.startsWith('caret')) {
        return `<button class="caret ${name === 'caret-off' ? 'off' : ''}" aria-label="More"></button>`;
    }
    return `<button class="tool ${pressed.includes(name) ? 'on' : ''}" aria-label="${name}"><svg><use href="#${name}"/></svg></button>`;
}

groups.forEach(group => {
    group.innerHTML = group.dataset.items.split(' ').map(makeItem).join('');
});

// holes in plate coordinates: x, y, radius, pull, reach
let holes = [
    [0, 0, 56, 5, 14],
    [-75, -75, 4, 2, 7],
    [75, -75, 4, 2, 7],
    [-75, 75, 4, 2, 7],
    [75, 75, 4, 2, 7]
];

// bend the regular grid around each hole
function warp(x, y) {
    let px = x;
    let py = y;
    holes.forEach(([cx, cy, radius, pull, reach]) => {
        let dx = x - cx;
        let dy = y - cy;
        let r = Math.hypot(dx, dy) || 1;
        let k = pull * Math.cos(4 * Math.atan2(dy, dx)) * Math.exp(-Math.abs(r - radius) / reach) / r;
        px += dx * k;
        py += dy * k;
    });
    return px.toFixed(2) + ' ' + py.toFixed(2);
}

let d = '';
for (let a = -100; a <= 100; a += 2) {
    let row = [];
    let col = [];
    for (let b = -100; b <= 100; b += 2) {
        row.push(warp(b, a));
        col.push(warp(a, b));
    }
    d += 'M' + row.join('L') + 'M' + col.join('L');
}
document.querySelector('#mesh').setAttribute('d', d);
```
